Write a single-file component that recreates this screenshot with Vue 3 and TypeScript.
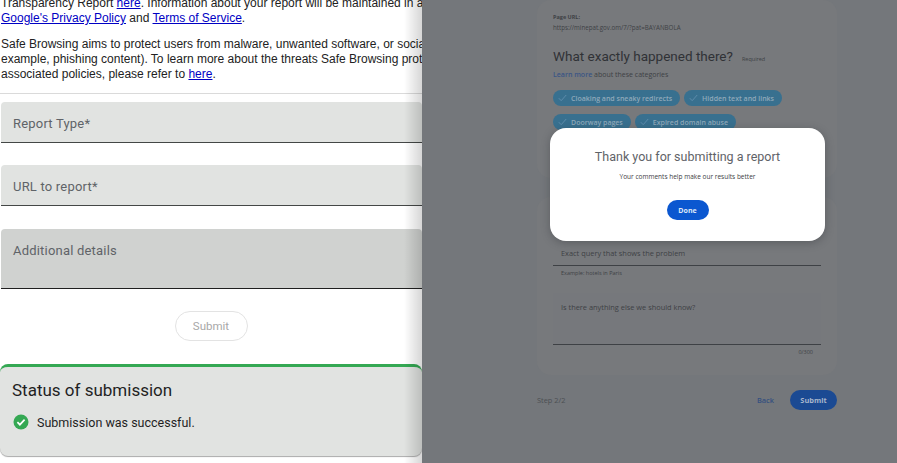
<script setup lang="ts">
const chips = [
  ["Cloaking and sneaky redirects", "Hidden text and links"],
  ["Doorway pages", "Expired domain abuse"],
];
</script>

<template>
  <div class="page">
    <main class="report">
      <div class="copy">
        <p>
          Transparency Report <a href="#">here</a>. Information about your report will be maintained in accordance with<br />
          <a href="#">Google's Privacy Policy</a> and <a href="#">Terms of Service</a>.
        </p>
        <p>
          Safe Browsing aims to protect users from malware, unwanted software, or social engineering (for<br />
          example, phishing content). To learn more about the threats Safe Browsing protects against and<br />
          associated policies, please refer to <a href="#">here</a>.
        </p>
      </div>
      <hr class="rule" />
      <div class="field">Report Type*</div>
      <div class="field field-url">URL to report*</div>
      <div class="field field-area">Additional details</div>
      <div class="submit-row"><button class="submit-ghost" type="button">Submit</button></div>
      <section class="status">
        <h2>Status of submission</h2>
        <div class="status-line">
          <svg width="16" height="16" viewBox="0 0 16 16">
            <circle cx="8" cy="8" r="7.5" fill="#34a853" />
            <path d="M4.4 8.2l2.5 2.5 4.7-5" fill="none" stroke="#fff" stroke-width="1.7" />
          </svg>
          <span>Submission was successful.</span>
        </div>
      </section>
    </main>

    <aside class="drawer">
      <div class="drawer-inner">
        <section class="card card-top">
          <div class="url-label">Page URL:</div>
          <div class="url-value">https://minepat.gov.om/7/?pat=BAYANBOLA</div>
          <div class="question">
            <span class="question-title">What exactly happened there?</span>
            <span class="required">Required</span>
          </div>
          <div class="learn"><a href="#">Learn more</a> about these categories</div>
          <div v-for="(row, i) in chips" :key="i" class="chip-row">
            <span v-for="chip in row" :key="chip" class="chip">
              <svg width="9" height="8" viewBox="0 0 9 8">
                <path d="M.8 4.2l2.4 2.5L8.2 1" fill="none" stroke="#5d8cab" stroke-width="1" />
              </svg>
              {{ chip }}
            </span>
          </div>
        </section>

        <section class="card card-bottom">
          <div class="query">Exact query that shows the problem</div>
          <div class="hint">Example: hotels in Paris</div>
          <div class="notes">Is there anything else we should know?</div>
          <div class="count">0/300</div>
        </section>

        <footer class="steps">
          <span class="step">Step 2/2</span>
          <span class="back">Back</span>
          <span class="send">Submit</span>
        </footer>
      </div>

      <div class="dialog">
        <h3>Thank you for submitting a report</h3>
        <p>Your comments help make our results better</p>
        <button type="button">Done</button>
      </div>
    </aside>
  </div>
</template>

<style scoped>
.page {
  display: grid;
  grid-template-columns: 422px 475px;
  width: 897px;
  height: 463px;
  overflow: hidden;
  background: #fff;
}

.report {
  position: relative;
  overflow: hidden;
  white-space: nowrap;
  font-family: "Roboto", sans-serif;
}

.report::after {
  content: "";
  position: absolute;
  top: 0;
  right: 0;
  bottom: 0;
  width: 18px;
  background: linear-gradient(to right, rgba(0, 0, 0, 0), rgba(0, 0, 0, 0.16));
}

.copy {
  margin-top: -4px;
  padding-left: 1px;
  font: 12px/15px "Liberation Sans", Arial, sans-serif;
  color: #222;
}

.copy p {
  margin: 0 0 11px;
}

.copy a {
  color: #0000c4;
}

.rule {
  margin: 11px 0 8px;
  border: 0;
  border-top: 1px solid #dadada;
}

.field {
  height: 41px;
  margin-left: 1px;
  padding: 14px 12px 0;
  box-sizing: border-box;
  background: #e1e3e1;
  border-bottom: 1px solid #444746;
  border-radius: 4px 4px 0 0;
  font-size: 13px;
  letter-spacing: 0.2px;
  color: #5f6368;
}

.field-url {
  margin-top: 22px;
}

.field-area {
  height: 60px;
  margin-top: 23px;
  background: #d0d2d0;
  border-bottom-color: #1f1f1f;
}

.submit-row {
  display: flex;
  justify-content: center;
  margin: 22px 0 23px;
}

.submit-ghost {
  width: 73px;
  height: 30px;
  background: #fff;
  border: 1px solid #e3e3e3;
  border-radius: 15px;
  font: 11.5px "Roboto", sans-serif;
  color: #a8a8a8;
}

.status {
  height: 92px;
  box-sizing: border-box;
  padding: 13px 12px 0;
  background: #e1e3e1;
  border-top: 3px solid #34a853;
  border-radius: 8px;
  box-shadow: 0 1px 1px #aaa;
  color: #1f1f1f;
}

.status h2 {
  margin: 0;
  font-size: 17px;
  font-weight: 400;
  line-height: 20px;
}

.status-line {
  display: flex;
  align-items: center;
  gap: 8px;
  margin-top: 14px;
  padding-left: 1px;
  font-size: 12.5px;
}

.drawer {
  position: relative;
  overflow: hidden;
  background: #74777b;
  font-family: "Open Sans", sans-serif;
  color: #3e4145;
  white-space: nowrap;
}

.drawer-inner {
  display: flex;
  flex-direction: column;
  padding: 0 60px 0 115px;
}

.card {
  background: #77797c;
  border-radius: 14px;
}

.card-top {
  height: 178px;
  box-sizing: border-box;
  padding: 14px 16px 0;
}

.url-label {
  font-size: 5.5px;
  font-weight: 700;
  line-height: 7px;
}

.url-value {
  margin-top: 3px;
  font-size: 6.2px;
  line-height: 8px;
}

.question {
  display: flex;
  align-items: baseline;
  gap: 9px;
  margin-top: 14px;
}

.question-title {
  font-family: "Roboto", sans-serif;
  font-size: 13.5px;
  line-height: 20px;
  color: #303236;
}

.required {
  font-size: 5.5px;
}

.learn {
  margin-top: 4px;
  font-size: 7px;
  line-height: 10px;
}

.learn a {
  color: #3a5585;
  text-decoration: none;
  font-weight: 600;
}

.chip-row {
  display: flex;
  gap: 4px;
  margin-top: 8px;
}

.learn + .chip-row {
  margin-top: 10px;
}

.chip {
  display: inline-flex;
  align-items: center;
  gap: 4px;
  height: 16px;
  padding: 0 8px 0 5px;
  background: #38708f;
  border-radius: 8px;
  font-size: 7px;
  font-weight: 600;
  color: #8fa9ba;
}

.card-bottom {
  height: 178px;
  margin-top: 19px;
  padding: 0 16px;
  box-sizing: border-box;
}

.query {
  height: 33px;
  margin-top: 36px;
  padding: 15px 8px 0;
  box-sizing: border-box;
  border-bottom: 1px solid #3e4145;
  font-size: 7.4px;
  line-height: 11px;
}

.hint {
  padding: 3px 8px 0;
  font-size: 5.5px;
  line-height: 8px;
}

.notes {
  height: 52px;
  margin-top: 16px;
  padding: 9px 8px 0;
  box-sizing: border-box;
  background: #76787c;
  border-bottom: 1px solid #3e4145;
  font-size: 7.4px;
  line-height: 11px;
}

.count {
  padding: 3px 8px 0;
  font-size: 5.5px;
  line-height: 8px;
  text-align: right;
}

.steps {
  display: flex;
  align-items: center;
  height: 20px;
  margin-top: 15px;
  font-size: 7.4px;
}

.step {
  flex: 1;
  color: #4c4f53;
}

.back {
  margin-right: 16px;
  color: #34507f;
  font-weight: 600;
}

.send {
  width: 47px;
  height: 20px;
  background: #1b4a93;
  border-radius: 10px;
  color: #a8b6cc;
  font-weight: 700;
  line-height: 20px;
  text-align: center;
}

.dialog {
  position: absolute;
  top: 128px;
  left: 128px;
  width: 275px;
  height: 113px;
  padding-top: 21px;
  box-sizing: border-box;
  background: #fff;
  border-radius: 16px;
  box-shadow: 0 2px 8px rgba(40, 44, 50, 0.35);
  text-align: center;
}

.dialog h3 {
  margin: 0;
  font-family: "Roboto", sans-serif;
  font-size: 12.5px;
  font-weight: 400;
  line-height: 15px;
  color: #5f6368;
}

.dialog p {
  margin: 8px 0 0;
  font-size: 6.5px;
  line-height: 10px;
  color: #3c4043;
}

.dialog button {
  display: block;
  width: 42px;
  height: 20px;
  margin: 18px auto 0;
  padding: 0;
  border: 0;
  border-radius: 10px;
  background: #0b57d0;
  font: 700 7px "Open Sans", sans-serif;
  color: #dfe8f8;
}
</style>
